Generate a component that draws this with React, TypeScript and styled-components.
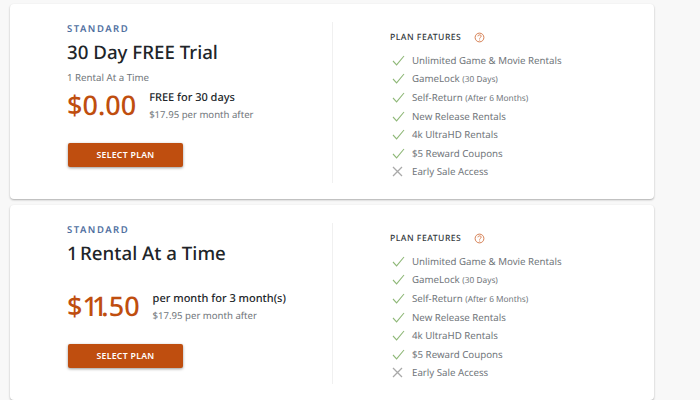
import React from 'react';
import styled, { createGlobalStyle } from 'styled-components';

const GlobalStyle = createGlobalStyle`
  html, body {
    margin: 0;
    padding: 0;
    height: 400px;
    overflow: hidden;
    background: #f8f8f8;
    font-family: "Noto Sans", "Open Sans", sans-serif;
    text-rendering: geometricPrecision;
  }
`;

const features = [
  { label: 'Unlimited Game & Movie Rentals', on: true },
  { label: 'GameLock', note: '(30 Days)', on: true },
  { label: 'Self-Return', note: '(After 6 Months)', on: true },
  { label: 'New Release Rentals', on: true },
  { label: '4k UltraHD Rentals', on: true },
  { label: '$5 Reward Coupons', on: true },
  { label: 'Early Sale Access', on: false },
];

const Check = () => (
  <svg width="13" height="11" viewBox="0 0 13 11" fill="none" stroke="#8fb878" strokeWidth="1.1">
    <path d="M1 6l3.6 3.8L12 1" />
  </svg>
);

const Cross = () => (
  <svg width="11" height="11" viewBox="0 0 11 11" fill="none" stroke="#a9a9a9" strokeWidth="1.3">
    <path d="M1 1l9 9M10 1l-9 9" />
  </svg>
);

const Help = () => (
  <svg width="11" height="11" viewBox="0 0 11 11" fill="none" stroke="#d0703f" strokeWidth="0.9">
    <circle cx="5.5" cy="5.5" r="4.4" />
    <path d="M3.9 4.3c.2-1 .9-1.4 1.7-1.4 1 0 1.6.6 1.6 1.3 0 1.1-1.6 1.2-1.6 2.4" />
    <path d="M5.6 7.6v.9" />
  </svg>
);

type PlanProps = {
  title: React.ReactNode;
  subtitle?: string;
  price: React.ReactNode;
  headline: string;
  after: string;
};

const Plan = ({ title, subtitle, price, headline, after }: PlanProps) => (
  <Card>
    <Left>
      <Tier>STANDARD</Tier>
      <Title>{title}</Title>
      <Subtitle>{subtitle}</Subtitle>
      <PriceRow>
        <Price>{price}</Price>
        <PriceInfo>
          <Headline>{headline}</Headline>
          <After>{after}</After>
        </PriceInfo>
      </PriceRow>
      <SelectButton>SELECT PLAN</SelectButton>
    </Left>
    <Right>
      <FeatureHead>
        PLAN FEATURES
        <Help />
      </FeatureHead>
      <FeatureList>
        {features.map((f) => (
          <Feature key={f.label}>
            <IconSlot>{f.on ? <Check /> : <Cross />}</IconSlot>
            <span>
              {f.label} {f.note && <Note>{f.note}</Note>}
            </span>
          </Feature>
        ))}
      </FeatureList>
    </Right>
  </Card>
);

const App = () => (
  <Page>
    <GlobalStyle />
    <Plan
      title="30 Day FREE Trial"
      subtitle="1 Rental At a Time"
      price="$0.00"
      headline="FREE for 30 days"
      after="$17.95 per month after"
    />
    <Plan
      title={
        <>
          <NarrowOne $tight="-2.5px">1</NarrowOne> Rental At a Time
        </>
      }
      price={
        <>
          $<NarrowOne $tight="-6px">11</NarrowOne>.50
        </>
      }
      headline="per month for 3 month(s)"
      after="$17.95 per month after"
    />
  </Page>
);

export default App;

const Page = styled.div`
  width: 644px;
  padding: 4px 46px 0 10px;
  display: flex;
  flex-direction: column;
  gap: 6px;
`;

const Card = styled.div`
  height: 195px;
  flex: none;
  box-sizing: border-box;
  padding: 18px 0 16px;
  background: #fff;
  border-radius: 4px;
  box-shadow: 0 1px 2px rgba(0, 0, 0, 0.3);
  display: grid;
  grid-template-columns: 323px 1fr;
`;

const Left = styled.div`
  padding-left: 57px;
  border-right: 1px solid #f0f0f0;
  display: flex;
  flex-direction: column;
  align-items: flex-start;
`;

const Tier = styled.div`
  font-size: 9.5px;
  line-height: 14px;
  font-weight: 600;
  letter-spacing: 1.5px;
  color: #4f6f9f;
`;

const Title = styled.div`
  margin-top: 4px;
  font-size: 18.7px;
  line-height: 26px;
  font-weight: 500;
  color: #212529;
`;

const Subtitle = styled.div`
  margin-top: 4px;
  height: 16px;
  font-size: 9.7px;
  line-height: 16px;
  color: #70757a;
`;

const PriceRow = styled.div`
  display: flex;
  align-items: center;
  gap: 13px;
  height: 42px;
  margin-top: -2px;
`;

const Price = styled.div`
  font-size: 27px;
  font-weight: 500;
  line-height: 42px;
  color: #bf4e0f;
`;

const NarrowOne = styled.span<{ $tight: string }>`
  letter-spacing: ${(props) => props.$tight};
`;

const PriceInfo = styled.div`
  display: flex;
  flex-direction: column;
  gap: 3px;
  padding-top: 2px;
`;

const Headline = styled.div`
  font-size: 11px;
  line-height: 14px;
  font-weight: 500;
  color: #212529;
`;

const After = styled.div`
  font-size: 9.6px;
  line-height: 14px;
  color: #70757a;
`;

const SelectButton = styled.button`
  margin: 17px 0 0 1px;
  width: 115px;
  height: 24px;
  padding: 0;
  border: 0;
  border-radius: 2px;
  background: #bf4e0f;
  box-shadow: 0 1px 3px rgba(0, 0, 0, 0.4);
  color: #fff;
  font-family: inherit;
  font-size: 8.7px;
  font-weight: 600;
  letter-spacing: 0.3px;
`;

const Right = styled.div`
  padding: 9px 0 0 57px;
`;

const FeatureHead = styled.div`
  display: flex;
  align-items: center;
  gap: 13px;
  font-size: 8.6px;
  line-height: 12px;
  font-weight: 500;
  letter-spacing: 0.5px;
  color: #343a40;
`;

const FeatureList = styled.div`
  margin-top: 8px;
  display: flex;
  flex-direction: column;
`;

const Feature = styled.div`
  display: flex;
  align-items: center;
  height: 18.6px;
  font-size: 9.7px;
  color: #70757a;
`;

const IconSlot = styled.span`
  width: 22px;
  padding-left: 2px;
  box-sizing: border-box;
  display: flex;
  align-items: center;
`;

const Note = styled.span`
  font-size: 8.3px;
`;
